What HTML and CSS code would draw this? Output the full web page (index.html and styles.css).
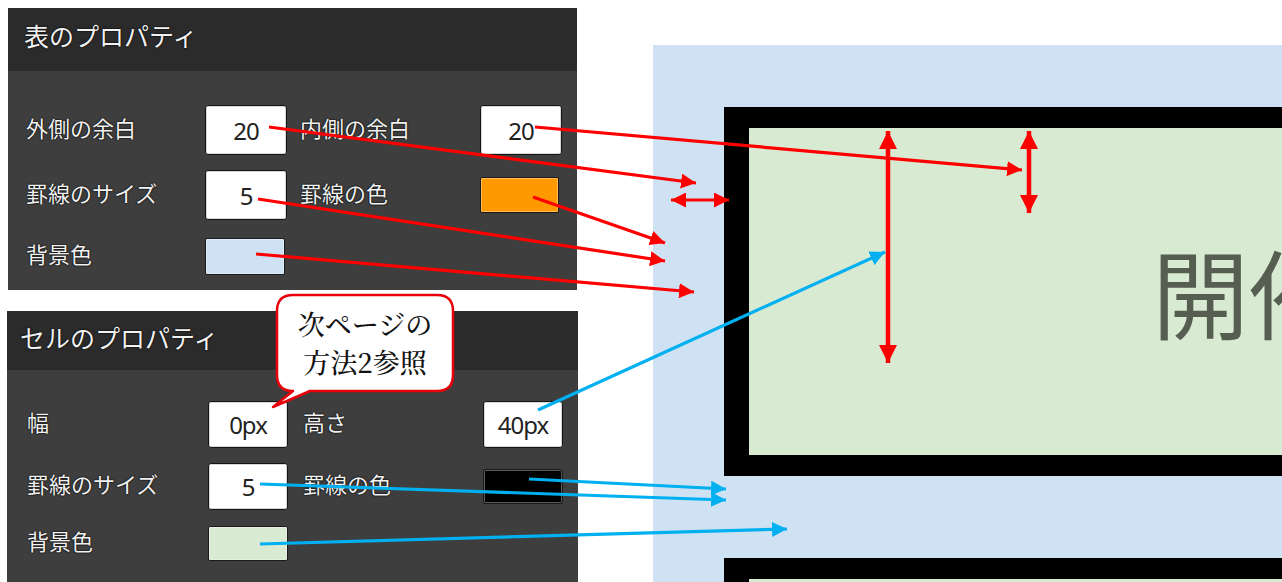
FILE: index.html
```html
<!DOCTYPE html>
<html lang="ja">
<head>
    <meta charset="UTF-8">
    <title>表とセルのプロパティ</title>
    <link rel="stylesheet" href="styles.css">
</head>
<body>
    <div class="page">
        <div class="left-col">
            <div class="panel panel-table">
                <div class="panel-head">表のプロパティ</div>
                <div class="panel-body">
                    <span class="label">外側の余白</span>
                    <div class="field">20</div>
                    <span class="label">内側の余白</span>
                    <div class="field">20</div>

                    <span class="label">罫線のサイズ</span>
                    <div class="field">5</div>
                    <span class="label">罫線の色</span>
                    <div class="swatch orange"></div>

                    <span class="label">背景色</span>
                    <div class="swatch blue"></div>
                </div>
            </div>

            <div class="panel panel-cell">
                <div class="panel-head">セルのプロパティ</div>
                <div class="panel-body">
                    <span class="label">幅</span>
                    <div class="field">0px</div>
                    <span class="label">高さ</span>
                    <div class="field">40px</div>

                    <span class="label">罫線のサイズ</span>
                    <div class="field">5</div>
                    <span class="label">罫線の色</span>
                    <div class="swatch black"></div>

                    <span class="label">背景色</span>
                    <div class="swatch green"></div>
                </div>
            </div>
        </div>

        <div class="canvas">
            <div class="tbl">
                <div class="cell">開催日時</div>
            </div>
            <div class="tbl tbl-next">
                <div class="cell"></div>
            </div>
        </div>
    </div>

    <!-- annotation arrows -->
    <svg class="arrows" width="1282" height="582" viewBox="0 0 1282 582">
        <defs>
            <marker id="redHead" markerUnits="userSpaceOnUse" markerWidth="15" markerHeight="15" viewBox="0 0 10 10" refX="10" refY="5" orient="auto-start-reverse">
                <path d="M0 0 L10 5 L0 10 z" fill="#ff0000"/>
            </marker>
            <marker id="redBig" markerUnits="userSpaceOnUse" markerWidth="18" markerHeight="18" viewBox="0 0 10 10" refX="10" refY="5" orient="auto-start-reverse">
                <path d="M0 0 L10 5 L0 10 z" fill="#ff0000"/>
            </marker>
            <marker id="blueHead" markerUnits="userSpaceOnUse" markerWidth="15" markerHeight="15" viewBox="0 0 10 10" refX="10" refY="5" orient="auto">
                <path d="M0 0 L10 5 L0 10 z" fill="#00b0f0"/>
            </marker>
        </defs>

        <g stroke="#ff0000" stroke-width="3.2" fill="none">
            <line x1="269" y1="127" x2="696" y2="183" marker-end="url(#redHead)"/>
            <line x1="535" y1="127" x2="1022" y2="170" marker-end="url(#redHead)"/>
            <line x1="671" y1="200" x2="729" y2="200" marker-start="url(#redHead)" marker-end="url(#redHead)"/>
            <line x1="533" y1="197" x2="665" y2="243" marker-end="url(#redHead)"/>
            <line x1="258" y1="199" x2="665" y2="261" marker-end="url(#redHead)"/>
            <line x1="256" y1="254" x2="694" y2="292" marker-end="url(#redHead)"/>
        </g>
        <g stroke="#ff0000" stroke-width="4.5" fill="none">
            <line x1="888" y1="131" x2="888" y2="363" marker-start="url(#redBig)" marker-end="url(#redBig)"/>
            <line x1="1029" y1="131" x2="1029" y2="213" marker-start="url(#redBig)" marker-end="url(#redBig)"/>
        </g>
        <g stroke="#00b0f0" stroke-width="3.2" fill="none">
            <line x1="538" y1="410" x2="885" y2="252" marker-end="url(#blueHead)"/>
            <line x1="260" y1="484" x2="726" y2="500" marker-end="url(#blueHead)"/>
            <line x1="529" y1="479" x2="726" y2="489" marker-end="url(#blueHead)"/>
            <line x1="260" y1="544" x2="787" y2="529" marker-end="url(#blueHead)"/>
        </g>

        <!-- callout bubble -->
        <path d="M293 391 L273 407 L310 391 L437 391 Q453 391 453 375 L453 311 Q453 295 437 295 L293 295 Q277 295 277 311 L277 375 Q277 391 293 391 z"
              fill="#ffffff" stroke="#e8000b" stroke-width="2.5" stroke-linejoin="round"/>
    </svg>
    <div class="callout">次ページの<br>方法2参照</div>
</body>
</html>
```

FILE: styles.css
```css
body {
    margin: 0;
    width: 1282px;
    height: 582px;
    overflow: hidden;
    position: relative;
    background: #fff;
    font-family: 'Noto Sans CJK JP', 'Noto Sans', sans-serif;
}
.page {
    display: flex;
    height: 582px;
}
.left-col {
    width: 577px;
    flex-shrink: 0;
    padding-top: 8px;
    display: flex;
    flex-direction: column;
}
.panel {
    flex-shrink: 0;
    background: #3e3e3e;
    color: #f2f2f2;
}
.panel-table {
    margin-left: 8px;
    width: 569px;
    height: 282px;
}
.panel-cell {
    margin-left: 7px;
    margin-top: 21px;
    width: 571px;
    height: 290px;
}
.panel-head {
    background: #2b2b2b;
    font-size: 25px;
    display: flex;
    align-items: center;
    box-sizing: border-box;
    text-shadow: 0 0 2px #000, 0 0 1px #000;
}
.panel-table .panel-head {
    height: 63px;
    padding-left: 16px;
    padding-bottom: 9px;
}
.panel-cell .panel-head {
    height: 59px;
    padding-left: 13px;
    padding-bottom: 8px;
}
.panel-body {
    display: grid;
    align-items: center;
}
.panel-table .panel-body {
    padding: 26px 0 0 18px;
    grid-template-columns: 179px 95px 180px 80px;
    grid-template-rows: 66px 64px 58px;
}
.panel-cell .panel-body {
    padding: 22px 0 0 20px;
    grid-template-columns: 181px 95px 180px 80px;
    grid-template-rows: 65px 58px 57px;
}
.label {
    font-size: 22px;
    padding-bottom: 7px;
    text-shadow: 0 0 2px #000, 0 0 1px #000;
    white-space: nowrap;
}
.field {
    background: #fff;
    color: #222;
    border: 1px solid #151515;
    border-radius: 3px;
    box-shadow: inset 0 0 0 1px #d8d8d8;
    display: flex;
    align-items: center;
    justify-content: center;
    font-family: 'Noto Sans', sans-serif;
    font-size: 24px;
    letter-spacing: -1px;
    box-sizing: border-box;
}
.panel-table .field {
    width: 82px;
    height: 50px;
}
.panel-cell .field {
    width: 80px;
    height: 47px;
}
.swatch {
    border: 1px solid #1a1a1a;
    border-radius: 2px;
    box-sizing: border-box;
    width: 80px;
    height: 37px;
    box-shadow: inset 0 0 0 1px rgba(255,255,255,0.35);
}
.panel-cell .swatch {
    height: 35px;
}
.orange { background: #ff9900; width: 79px; height: 36px; }
.blue { background: #cfe2f3; }
.black { background: #000; }
.green { background: #d9ead3; }

.canvas {
    margin-left: 76px;
    margin-top: 45px;
    flex: 1;
    background: #cfe2f3;
    padding: 62px 0 0 71px;
    overflow: hidden;
}
.tbl {
    background: #000;
    padding: 21px 0 21px 25px;
}
.tbl-next {
    margin-top: 82px;
    padding-bottom: 0;
}
.cell {
    background: #d9ead3;
    height: 327px;
    display: flex;
    align-items: center;
    padding-left: 403px;
    padding-bottom: 4px;
    box-sizing: border-box;
    white-space: nowrap;
    font-size: 97px;
    line-height: 1;
    color: #565e52;
}
.tbl-next .cell {
    height: 40px;
}

.arrows {
    position: absolute;
    left: 0;
    top: 0;
    pointer-events: none;
}
.callout {
    position: absolute;
    left: 277px;
    top: 295px;
    width: 176px;
    height: 96px;
    display: flex;
    align-items: center;
    justify-content: center;
    text-align: center;
    font-family: 'Noto Serif CJK JP', 'Liberation Serif', 'Noto Sans CJK JP', serif;
    font-size: 27px;
    line-height: 38px;
    font-weight: 500;
    color: #111;
}
```
